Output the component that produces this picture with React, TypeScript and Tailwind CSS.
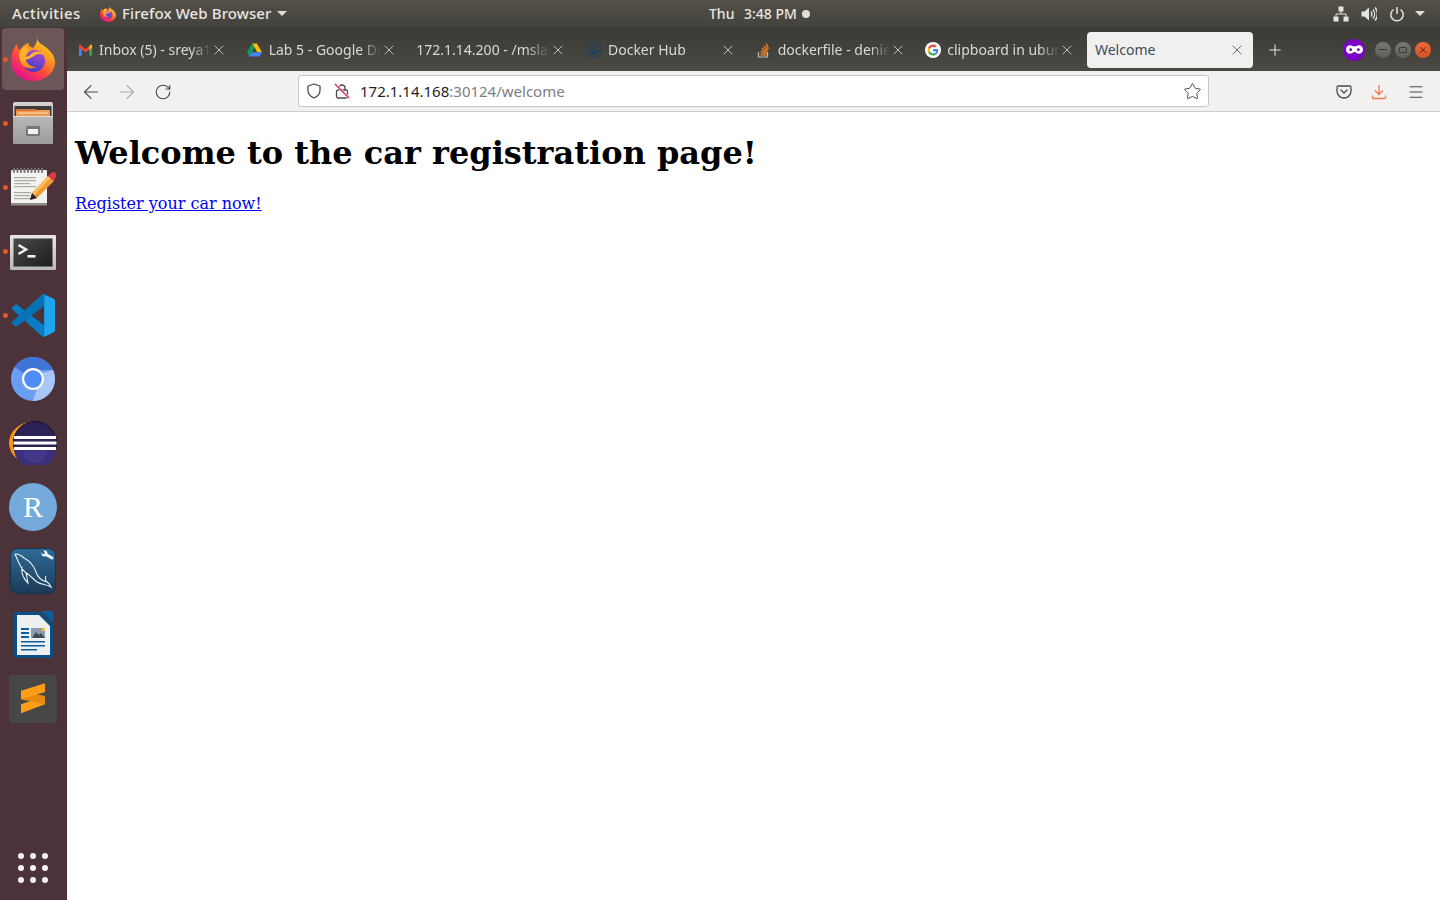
import React from "react";
import { ArrowLeft, ArrowRight, RotateCw, Star, Plus, X, Menu } from "lucide-react";

function FirefoxIcon({ className, id }: { className: string; id: string }) {
  return (
    <svg viewBox="0 0 44 46" className={className}>
      <defs>
        <linearGradient id={id + "a"} x1="0.85" y1="0.05" x2="0.25" y2="0.95">
          <stop offset="0" stopColor="#ffe226" />
          <stop offset="0.35" stopColor="#ff9a1f" />
          <stop offset="0.65" stopColor="#ff4a3a" />
          <stop offset="1" stopColor="#e3108f" />
        </linearGradient>
        <linearGradient id={id + "b"} x1="0.7" y1="0" x2="0.3" y2="1">
          <stop offset="0" stopColor="#a64ad8" />
          <stop offset="1" stopColor="#3d3fc0" />
        </linearGradient>
        <linearGradient id={id + "c"} x1="0" y1="0" x2="1" y2="1">
          <stop offset="0" stopColor="#ffc928" />
          <stop offset="1" stopColor="#ff7a1c" />
        </linearGradient>
      </defs>
      <path
        d="M26 0C25 5 28 8 33 11C39 15 44 21 44 27C44 38 34 46 22 46C10 46 0 38 0 26C0 20 2 13 6 9C6 12 7 14 9 15C11 11 14 9 18 8C17 10 19 12 22 13C25 10 27 5 26 0Z"
        fill={`url(#${id}a)`}
      />
      <circle cx="23" cy="26" r="11" fill={`url(#${id}b)`} />
      <path
        d="M8 19C9 15 12 12 16 10C15 13 17 15 21 14.500C17 17 14 21 15 25C16 29 20 32 25 32C20 35 13 33 10 28C9 25 8 22 8 19Z"
        fill={`url(#${id}c)`}
      />
      <path
        d="M11 24C14 21 18 22 20 19C24 15 30 16 33 20C29 18 25 19 23 21C20 23 15 26 11 24Z"
        fill="#ffb62a"
      />
    </svg>
  );
}

function Files() {
  return (
    <svg viewBox="0 0 44 44" className="w-[44px] h-[44px]">
      <defs>
        <linearGradient id="fa" x1="0" y1="0" x2="0" y2="1">
          <stop offset="0" stopColor="#d4d4d2" />
          <stop offset="1" stopColor="#8f8f8d" />
        </linearGradient>
        <linearGradient id="fb" x1="0" y1="0" x2="0" y2="1">
          <stop offset="0" stopColor="#b8b8b6" />
          <stop offset="1" stopColor="#9b9b99" />
        </linearGradient>
      </defs>
      <path d="M4 1h36a2 2 0 0 1 2 2v38a2 2 0 0 1-2 2H4a2 2 0 0 1-2-2V3a2 2 0 0 1 2-2z" fill="url(#fa)" />
      <rect x="3.500" y="5" width="37" height="13" fill="#3e3d3b" />
      <rect x="5" y="9" width="34" height="9" fill="#ef9a4f" />
      <rect x="5" y="8" width="20" height="2" fill="#d7763a" />
      <rect x="7" y="11.500" width="30" height="1" fill="#ffe2b9" />
      <rect x="2" y="15" width="40" height="28" rx="1" fill="url(#fb)" />
      <rect x="2" y="15" width="40" height="1" fill="#dededc" />
      <rect x="15" y="25" width="14" height="10" rx="1.500" fill="#77767a" />
      <rect x="17" y="28" width="10" height="5" fill="#f3f3f1" />
    </svg>
  );
}

function Notes() {
  return (
    <svg viewBox="0 0 46 40" className="w-[46px] h-[40px]">
      <rect x="1" y="3" width="36" height="35" rx="1" fill="#f2f2ee" />
      <rect x="1" y="36" width="36" height="2.500" fill="#8d8d8a" />
      {[3, 6.500, 10, 13.500, 17, 20.500, 24, 27.500, 31].map((x) => (
        <rect key={x} x={x} y="1" width="2" height="5" rx="1" fill="#77777a" />
      ))}
      {[10, 13, 16, 19, 25, 28, 31].map((y, i) => (
        <rect key={y} x="4" y={y} width={i === 2 || i === 5 ? 16 : i > 3 ? 17 : 22} height="1.200" fill="#a9a9a6" />
      ))}
      <path d="M22 26 L38 9 L44 14 L27 31 L20 33Z" fill="#f19a34" />
      <path d="M22 26 L38 9 L40.500 11 L24 28.500Z" fill="#f8bd5f" />
      <path d="M38 9 L41 6 A3 3 0 0 1 45.500 10.500 L44 14Z" fill="#d9394b" />
      <path d="M22 26 L27 31 L20 33Z" fill="#252525" />
    </svg>
  );
}

function Terminal() {
  return (
    <svg viewBox="0 0 46 35" className="w-[46px] h-[35px] mt-[3px]">
      <defs>
        <linearGradient id="ta" x1="0" y1="0" x2="1" y2="1">
          <stop offset="0" stopColor="#4a4a4a" />
          <stop offset="1" stopColor="#1c1c1c" />
        </linearGradient>
        <linearGradient id="tb" x1="0" y1="0" x2="0" y2="1">
          <stop offset="0" stopColor="#e6e6e6" />
          <stop offset="1" stopColor="#b9b9b9" />
        </linearGradient>
      </defs>
      <rect x="0" y="0" width="46" height="35" rx="1" fill="url(#tb)" />
      <rect x="3.500" y="3.500" width="39" height="28" fill="url(#ta)" />
      <path d="M8.500 10l7.500 4.500-7.500 4.500" fill="none" stroke="#f1f1f1" strokeWidth="2.600" />
      <rect x="17.500" y="20" width="8" height="2.600" fill="#f1f1f1" />
    </svg>
  );
}

function VSCode() {
  return (
    <svg viewBox="0 0 100 100" className="w-[43px] h-[43px]">
      <path
        d="M70.900 99.300a6.200 6.200 0 0 0 5-.2l20.600-9.900a6.200 6.200 0 0 0 3.500-5.600V16.400a6.200 6.200 0 0 0-3.500-5.600L75.900.9a6.200 6.200 0 0 0-7 1.200L29.400 38.100 12.200 25.100a4.200 4.200 0 0 0-5.300.2L1.400 30.300a4.200 4.200 0 0 0 0 6.200L16.300 50 1.400 63.500a4.200 4.200 0 0 0 0 6.200l5.500 5a4.200 4.200 0 0 0 5.300.2l17.200-13 39.500 36a6.200 6.200 0 0 0 2 1.400zM75 27.300 45 50l30 22.700z"
        fill="#0a7cc4"
        fillRule="evenodd"
      />
      <path d="M75 1.300a6 6 0 0 1 1 .3l20.600 9.200a6.200 6.200 0 0 1 3.400 5.600v67a6.200 6.200 0 0 1-3.500 5.600L76 98.900a6 6 0 0 1-1 .3z" fill="#1fa5ee" />
      <path d="M29.400 61.900 12.200 75a4.200 4.200 0 0 1-5.300-.3l-5.500-5a4.200 4.200 0 0 1 0-6.200L68.900 2.100a6 6 0 0 1 6.100-.8v26L29.400 61.900z" fill="#0668a8" opacity="0.55" />
    </svg>
  );
}

function Chromium() {
  return (
    <svg viewBox="0 0 44 44" className="w-[44px] h-[44px]">
      <circle cx="22" cy="22" r="22" fill="#6a9df4" />
      <path d="M22 22 L3.500 10 A22 22 0 0 1 42 13 L22 13 Z" fill="#4074d6" />
      <path d="M31 16 L42 13 A22 22 0 0 1 22 44 Z" fill="#a9c6f9" />
      <circle cx="22" cy="22" r="11" fill="#fff" />
      <circle cx="22" cy="22" r="8.800" fill="#4e8df7" />
    </svg>
  );
}

function Eclipse() {
  return (
    <svg viewBox="0 0 48 44" className="w-[48px] h-[44px]">
      <path d="M26 0A26 22 0 0 0 26 44A22 22 0 0 1 26 0Z" fill="#f7941e" />
      <circle cx="26" cy="22" r="21.500" fill="#2c2255" stroke="#15122b" strokeWidth="1" />
      <path d="M5 27h42a21 21 0 0 1-42 0z" fill="#3b2f7a" />
      <path d="M14 30h24a12 12 0 0 1-24 0z" fill="#4a3d95" opacity="0.6" />
      <rect x="5" y="15" width="42" height="3" fill="#fff" />
      <rect x="4.500" y="20.500" width="43" height="3" fill="#fff" />
      <rect x="5" y="26" width="42" height="3" fill="#fff" />
    </svg>
  );
}

function Workbench() {
  return (
    <svg viewBox="0 0 46 46" className="w-[46px] h-[46px]">
      <defs>
        <linearGradient id="wa" x1="0" y1="0" x2="0" y2="1">
          <stop offset="0" stopColor="#2e6b97" />
          <stop offset="1" stopColor="#1b3a58" />
        </linearGradient>
      </defs>
      <rect x="0.500" y="0.500" width="45" height="45" rx="7" fill="url(#wa)" stroke="#17324c" />
      <path
        d="M5 6C9 6 11 7 14 10C20 13 24 18 26 24C28 30 32 33 37 34C35 32 35 30 36 28M37 34C39 35 40 37 41 39C36 36 32 37 27 34C23 31 20 27 15 24C12 22 9 16 5 6M12 19C11 24 13 30 18 35C17 31 17 28 16 25"
        fill="none"
        stroke="#e9eef2"
        strokeWidth="1.100"
      />
      <path d="M36 6.500L42 10" stroke="#f2f5f7" strokeWidth="2.800" strokeLinecap="round" />
      <circle cx="34.500" cy="5.500" r="3" fill="#f2f5f7" />
      <path d="M33 2L35 5.500 33 6.500 30.500 3Z" fill="#2a6389" />
    </svg>
  );
}

function Writer() {
  return (
    <svg viewBox="0 0 40 48" className="w-[40px] h-[48px]">
      <path d="M28 0h10a2 2 0 0 1 2 2v10z" fill="#0c5f9e" />
      <path d="M3 1h24l13 13v31a2 2 0 0 1-2 2H3a2 2 0 0 1-2-2V3a2 2 0 0 1 2-2z" fill="#074f86" />
      <path d="M4 4h22l11 11v29H4z" fill="#eef0f0" />
      <rect x="8" y="17" width="8" height="2" fill="#0c5f9e" />
      <rect x="8" y="21" width="8" height="2" fill="#0c5f9e" />
      <rect x="8" y="25" width="8" height="2" fill="#0c5f9e" />
      <rect x="8" y="30" width="24" height="1.500" fill="#0c5f9e" />
      <rect x="8" y="34" width="24" height="1.500" fill="#0c5f9e" />
      <rect x="8" y="38" width="16" height="1.500" fill="#0c5f9e" />
      <rect x="18" y="17" width="14" height="10" fill="#8c9cab" />
      <path d="M19 27l4-6 3 3 2-2 4 5z" fill="#3d4a57" />
      <rect x="29" y="17" width="3" height="3" fill="#e8c54a" />
    </svg>
  );
}

function Sublime() {
  return (
    <svg viewBox="0 0 48 48" className="w-[48px] h-[48px]">
      <rect width="48" height="48" rx="3" fill="#474747" />
      <path d="M36 21V29.300L12 38.300V29.300Z" fill="#ff9d17" />
      <path d="M12 16L36 21V29.300L12 24.300Z" fill="#e98a10" />
      <path d="M36 8.300V17L12 24.300V15.700Z" fill="#ff9d17" />
    </svg>
  );
}

function Gmail() {
  return (
    <svg viewBox="0 0 16 12" className="w-[15px] h-[12px] shrink-0">
      <path d="M1 12V2.500L4 3.500V12H1Z" fill="#4285f4" />
      <path d="M12 12V3.500L15 2.500V12H12Z" fill="#34a853" />
      <path d="M1 3.500 V1.500C1 .5 2.500 0 3.200 .8L8 5 12.800 .8C13.500 0 15 .5 15 1.500V3.500L8 8.500Z" fill="#ea4335" />
      <path d="M12 3.500 L12.800 .8C13.500 0 15 .5 15 1.500V3.500L12 6Z" fill="#fbbc04" />
    </svg>
  );
}

function Drive() {
  return (
    <svg viewBox="0 0 16 14" className="w-[15px] h-[14px] shrink-0">
      <path d="M5.500 0h5L16 9.500h-5Z" fill="#fbbc04" />
      <path d="M5.500 0 8 4.500 2.500 14 0 9.500Z" fill="#0f9d58" />
      <path d="M5 9.500h11L13.500 14H2.500Z" fill="#4285f4" />
    </svg>
  );
}

function DockerFav() {
  return (
    <svg viewBox="0 0 16 16" className="w-[16px] h-[16px] shrink-0">
      <circle cx="8" cy="8" r="7.300" fill="none" stroke="#1d4260" strokeWidth="1.200" />
      <path d="M2.500 8.500h9c1 0 1.500-1 2-1-.5 3-3 5-6 5-2.500 0-4.500-1.500-5-4z" fill="#1d4260" />
      <rect x="5" y="5.500" width="2" height="2" fill="#1d4260" />
      <rect x="7.500" y="3.500" width="2" height="4" fill="#1d4260" />
    </svg>
  );
}

function StackFav() {
  return (
    <svg viewBox="0 0 14 16" className="w-[14px] h-[16px] shrink-0">
      <path d="M1.500 10v5h9v-5" fill="none" stroke="#bcbbbb" strokeWidth="1.200" />
      <g stroke="#f48024" strokeWidth="1.300">
        <path d="M3.500 13h6" />
        <path d="M3.600 10.800l6 .6" />
        <path d="M4 8.500l5.800 1.600" />
        <path d="M5 6l5.200 3" />
        <path d="M6.800 3.700l4 4.300" />
        <path d="M9.300 1.500l2.200 5.300" />
      </g>
    </svg>
  );
}

function GoogleFav() {
  return (
    <svg viewBox="0 0 16 16" className="w-[16px] h-[16px] shrink-0">
      <circle cx="8" cy="8" r="8" fill="#fff" />
      <path d="M13.200 8.200c0-.4 0-.8-.1-1.200H8v2.300h3a2.500 2.500 0 0 1-1.100 1.700l1.700 1.300c1-1 1.600-2.400 1.600-4.100z" fill="#4285f4" />
      <path d="M8 13.500c1.500 0 2.700-.5 3.600-1.300L9.900 11c-.5.300-1.100.5-1.900.5a3.300 3.300 0 0 1-3.100-2.300L3.100 10.500A5.500 5.500 0 0 0 8 13.500z" fill="#34a853" />
      <path d="M4.900 9.200a3.300 3.300 0 0 1 0-2.300L3.100 5.500a5.500 5.500 0 0 0 0 5z" fill="#fbbc05" />
      <path d="M8 4.700c.8 0 1.500.3 2.100.8l1.500-1.500A5.500 5.500 0 0 0 3.100 5.500l1.800 1.400A3.300 3.300 0 0 1 8 4.700z" fill="#ea4335" />
    </svg>
  );
}

const tabs: { title: string; icon: React.ReactNode | null; active?: boolean }[] = [
  { title: "Inbox (5) - sreya1234", icon: <Gmail /> },
  { title: "Lab 5 - Google Drive", icon: <Drive /> },
  { title: "172.1.14.200 - /mslab/", icon: null },
  { title: "Docker Hub", icon: <DockerFav /> },
  { title: "dockerfile - denied", icon: <StackFav /> },
  { title: "clipboard in ubuntu", icon: <GoogleFav /> },
  { title: "Welcome", icon: null, active: true },
];

function Tab({ title, icon, active }: { title: string; icon: React.ReactNode | null; active?: boolean }) {
  return (
    <div
      className={
        "w-[166px] h-[36px] shrink-0 rounded-[4px] flex items-center pl-[8px] pr-[8px] " +
        (active ? "bg-[#f2f0ee] text-[#3d4c5c]" : "text-[#dbd9d4]")
      }
    >
      {icon && <span className="w-[16px] mr-[6px] flex justify-center shrink-0">{icon}</span>}
      <span
        className={
          "flex-1 min-w-0 whitespace-nowrap overflow-hidden text-[14px] leading-[20px] " +
          (active ? "" : "[mask-image:linear-gradient(to_right,black_82%,transparent_100%)]")
        }
      >
        {title}
      </span>
      <X
        className={"w-[16px] h-[16px] shrink-0 " + (active ? "text-[#4a4a4a]" : "text-[#e0ded9]")}
        strokeWidth={1.200}
      />
    </div>
  );
}

function DockItem({ children, running, active }: { children: React.ReactNode; running?: boolean; active?: boolean }) {
  return (
    <div className="relative h-[62px] w-[67px] pr-[1px] flex items-center justify-center mb-[2px] shrink-0">
      {active && <div className="absolute left-[2px] top-0 w-[62px] h-[62px] rounded-[4px] bg-[#6c5657]" />}
      {running && <div className="absolute left-[2.500px] top-[29px] w-[5px] h-[5px] rounded-full bg-[#e95420]" />}
      <div className="relative flex">{children}</div>
    </div>
  );
}

function Network() {
  return (
    <svg viewBox="0 0 16 16" className="w-[16px] h-[16px]">
      <rect x="5.500" y="0.500" width="5" height="5" fill="#e6e4df" />
      <rect x="0.500" y="10.500" width="5" height="5" fill="#e6e4df" />
      <rect x="10.500" y="10.500" width="5" height="5" fill="#e6e4df" />
      <path d="M8 5v3M3 10.500V8h10v2.500" fill="none" stroke="#e6e4df" />
    </svg>
  );
}

function Volume() {
  return (
    <svg viewBox="0 0 16 16" className="w-[16px] h-[16px]">
      <path d="M0.500 5.500h3L8 1.500v13l-4.500-4h-3z" fill="#e6e4df" />
      <path d="M10 5.500a4 4 0 0 1 0 5M12 3.500a7 7 0 0 1 0 9M14 1.500a10 10 0 0 1 0 13" fill="none" stroke="#e6e4df" strokeWidth="1.300" />
    </svg>
  );
}

function Power() {
  return (
    <svg viewBox="0 0 16 16" className="w-[16px] h-[16px]">
      <path d="M4.500 3.500a6.200 6.200 0 1 0 7 0" fill="none" stroke="#e6e4df" strokeWidth="1.500" />
      <path d="M8 1v7" fill="none" stroke="#e6e4df" strokeWidth="1.500" />
    </svg>
  );
}

function Caret({ className }: { className: string }) {
  return (
    <svg viewBox="0 0 10 5" className={className}>
      <path d="M0 0h10L5 5z" fill="#e0ded9" />
    </svg>
  );
}

function Shield() {
  return (
    <svg viewBox="0 0 16 16" className="w-[16px] h-[16px]">
      <path d="M8 1l6 2v4.500c0 3.500-2.500 6-6 7.500-3.500-1.500-6-4-6-7.500V3z" fill="none" stroke="#4a4a4f" strokeWidth="1.300" strokeLinejoin="round" />
    </svg>
  );
}

function BrokenLock() {
  return (
    <svg viewBox="0 0 16 16" className="w-[16px] h-[16px]">
      <path d="M5 7V5a3 3 0 0 1 6 0v2" fill="none" stroke="#4a4a4f" strokeWidth="1.300" />
      <rect x="2.500" y="7" width="11" height="8" rx="1.500" fill="none" stroke="#4a4a4f" strokeWidth="1.300" />
      <path d="M1 1l14 14" stroke="#f0f0f0" strokeWidth="2.500" />
      <path d="M1 1l14 14" stroke="#e22850" strokeWidth="1.200" />
    </svg>
  );
}

function Pocket() {
  return (
    <svg viewBox="0 0 16 16" className="w-[16px] h-[16px]">
      <path d="M2.500 2h11A1.500 1.500 0 0 1 15 3.500V7a7 7 0 0 1-14 0V3.500A1.500 1.500 0 0 1 2.500 2z" fill="none" stroke="#4a4a4f" strokeWidth="1.300" />
      <path d="M5 6l3 3 3-3" fill="none" stroke="#4a4a4f" strokeWidth="1.300" strokeLinecap="round" strokeLinejoin="round" />
    </svg>
  );
}

function Download() {
  return (
    <svg viewBox="0 0 16 16" className="w-[16px] h-[16px]">
      <path d="M8 1v9M4 6.500L8 10.500 12 6.500" fill="none" stroke="#ee7a50" strokeWidth="1.300" />
      <path d="M1.500 11.500v2a1 1 0 0 0 1 1h11a1 1 0 0 0 1-1v-2" fill="none" stroke="#ee7a50" strokeWidth="1.300" />
    </svg>
  );
}

export default function App() {
  return (
    <div className="w-[1440px] h-[900px] overflow-hidden flex flex-col bg-white font-['Noto_Sans',sans-serif]">
      <header className="h-[27px] shrink-0 flex items-center bg-gradient-to-b from-[#53504a] to-[#44423c] text-[#e8e6e1] text-[14px] font-medium">
        <div className="w-[709px] flex items-center pl-[12px]">
          <span className="w-[88px] text-[15px] tracking-[0.4px]">Activities</span>
          <FirefoxIcon id="ffs" className="w-[16px] h-[17px]" />
          <span className="ml-[6px] text-[15px] tracking-[0.1px]">Firefox Web Browser</span>
          <Caret className="w-[10px] h-[5px] ml-[5px]" />
        </div>
        <span className="w-[35px]">Thu</span>
        <span>3:48 PM</span>
        <span className="w-[8px] h-[8px] rounded-full bg-[#e0ded9] ml-[5px]" />
        <div className="ml-auto flex items-center pr-[15px] gap-[12px]">
          <Network />
          <Volume />
          <Power />
          <Caret className="w-[10px] h-[5px] -ml-[2px]" />
        </div>
      </header>
      <div className="flex-1 min-h-0 flex">
        <aside className="w-[67px] shrink-0 bg-[#4b3339] flex flex-col pt-[1px]">
          <DockItem running active><span className="flex -mt-[2px]"><FirefoxIcon id="ffb" className="w-[44px] h-[46px]" /></span></DockItem>
          <DockItem running><Files /></DockItem>
          <DockItem running><Notes /></DockItem>
          <DockItem running><Terminal /></DockItem>
          <DockItem running><VSCode /></DockItem>
          <DockItem><Chromium /></DockItem>
          <DockItem><Eclipse /></DockItem>
          <DockItem>
            <div className="w-[48px] h-[48px] rounded-full bg-[#74a9dc] flex items-center justify-center text-white text-[30px] leading-none font-['Liberation_Serif',serif]">R</div>
          </DockItem>
          <DockItem><Workbench /></DockItem>
          <DockItem><Writer /></DockItem>
          <DockItem><Sublime /></DockItem>
          <div className="mt-auto h-[64px] pr-[1px] flex items-center justify-center">
            <div className="grid grid-cols-3 gap-[6px]">
              {Array.from({ length: 9 }).map((_, i) => (
                <span key={i} className="w-[6px] h-[6px] rounded-full bg-[#f4f2f0]" />
              ))}
            </div>
          </div>
        </aside>
        <main className="flex-1 min-w-0 flex flex-col">
          <div className="h-[44px] shrink-0 flex items-center pl-[2px] pt-[1px] gap-[3.670px] bg-gradient-to-b from-[#3c3a35] to-[#4b4943]">
            {tabs.map((t) => (
              <Tab key={t.title} title={t.title} icon={t.icon} active={t.active} />
            ))}
            <Plus className="w-[18px] h-[18px] text-[#e8e6e1] ml-[9px] shrink-0" strokeWidth={1.400} />
            <div className="ml-[56px] w-[22px] h-[22px] rounded-full bg-[#7a00c8] flex items-center justify-center shrink-0">
              <svg viewBox="0 0 20 10" className="w-[17px] h-[9px]">
                <path fillRule="evenodd" fill="#fff" d="M5 0c2 0 3.500 1.500 5 1.500S13 0 15 0c3 0 5 2 5 5s-2 5-5 5c-2 0-3.500-2-5-2s-3 2-5 2C2 10 0 8 0 5s2-5 5-5zM5.500 3.500a1.700 1.700 0 1 0 0 3.400 1.700 1.700 0 0 0 0-3.400zM14.500 3.500a1.700 1.700 0 1 0 0 3.400 1.700 1.700 0 0 0 0-3.400z" />
              </svg>
            </div>
            <div className="ml-[6px] flex items-center gap-[4px] shrink-0">
              <span className="w-[16px] h-[16px] rounded-full bg-gradient-to-b from-[#7a7873] to-[#5f5d58] flex items-center justify-center">
                <span className="w-[8px] h-[1px] bg-[#3c3a35]" />
              </span>
              <span className="w-[16px] h-[16px] rounded-full bg-gradient-to-b from-[#7a7873] to-[#5f5d58] flex items-center justify-center">
                <span className="w-[8px] h-[6px] border border-[#3c3a35] rounded-[1px]" />
              </span>
              <span className="w-[16px] h-[16px] rounded-full bg-gradient-to-b from-[#ec6a38] to-[#d94e22] flex items-center justify-center">
                <X className="w-[10px] h-[10px] text-[#43291d]" strokeWidth={2} />
              </span>
            </div>
          </div>
          <div className="h-[41px] shrink-0 flex items-center bg-[#f2f1f0] border-b border-[#cfcecc] text-[#4a4a4f]">
            <ArrowLeft className="w-[22px] h-[22px] ml-[13px] mt-[1px] shrink-0" strokeWidth={1.300} />
            <ArrowRight className="w-[22px] h-[22px] ml-[14px] mt-[1px] shrink-0 text-[#a9a9ab]" strokeWidth={1.300} />
            <RotateCw className="w-[18px] h-[18px] ml-[16px] mt-[1px] shrink-0" strokeWidth={1.500} />
            <div className="ml-[126px] w-[911px] h-[32px] shrink-0 bg-white border border-[#c8c7c5] rounded-[3px] flex items-center pl-[7px] pr-[6px]">
              <Shield />
              <span className="ml-[12px]"><BrokenLock /></span>
              <span className="ml-[10px] mt-[1px] text-[15px] text-[#1f1f22] whitespace-nowrap">
                172.1.14.168<span className="text-[#7d7d82]">:30124/welcome</span>
              </span>
              <Star className="ml-auto w-[19px] h-[19px]" strokeWidth={1.200} />
            </div>
            <span className="ml-[127px] mt-[1px] flex"><Pocket /></span>
            <span className="ml-[19px] mt-[1px] flex"><Download /></span>
            <Menu className="ml-[20px] mt-[1px] w-[18px] h-[18px] shrink-0" strokeWidth={1.500} />
          </div>
          <div className="flex-1 min-h-0 px-[8px] pt-[23px] font-['DejaVu_Serif',serif] text-black">
            <h1 className="text-[32px] font-bold leading-[37px] m-0">Welcome to the car registration page!</h1>
            <p className="mt-[22px] text-[16px] leading-[19px]">
              <a href="#" className="text-[#0000ee] underline">Register your car now!</a>
            </p>
          </div>
        </main>
      </div>
    </div>
  );
}
